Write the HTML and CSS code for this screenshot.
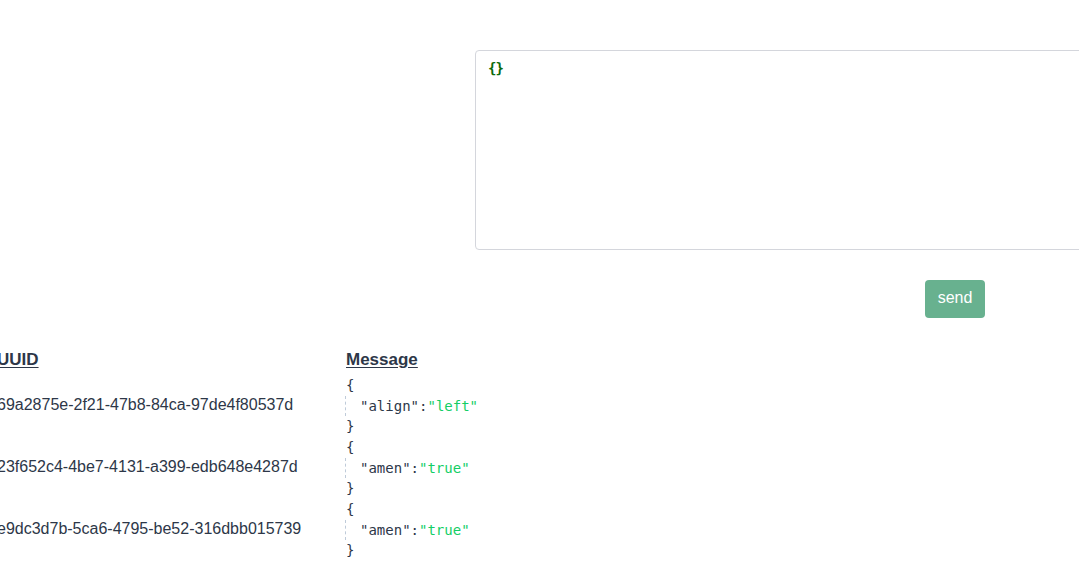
FILE: index.html
```html
<!DOCTYPE html>
<html lang="en">
<head>
<meta charset="utf-8">
<title>Messages</title>
<link rel="stylesheet" href="styles.css">
</head>
<body>
<div class="page">
  <section class="composer">
    <div class="editor"><span class="code">{}</span></div>
    <div class="actions"><button class="send">send</button></div>
  </section>
  <section class="table">
    <div class="th">UUID</div>
    <div class="th">Message</div>

    <div class="uuid">69a2875e-2f21-47b8-84ca-97de4f80537d</div>
    <div class="json">
      <div class="line">{</div>
      <div class="line"><span class="indent"></span><span class="key">"align"</span>:<span class="str">"left"</span></div>
      <div class="line">}</div>
    </div>

    <div class="uuid">23f652c4-4be7-4131-a399-edb648e4287d</div>
    <div class="json">
      <div class="line">{</div>
      <div class="line"><span class="indent"></span><span class="key">"amen"</span>:<span class="str">"true"</span></div>
      <div class="line">}</div>
    </div>

    <div class="uuid">e9dc3d7b-5ca6-4795-be52-316dbb015739</div>
    <div class="json">
      <div class="line">{</div>
      <div class="line"><span class="indent"></span><span class="key">"amen"</span>:<span class="str">"true"</span></div>
      <div class="line">}</div>
    </div>
  </section>
</div>
</body>
</html>
```
FILE: styles.css
```css
html, body {
  margin: 0;
  padding: 0;
  background: #ffffff;
}
body {
  width: 1079px;
  height: 561px;
  overflow: hidden;
  font-family: "Liberation Sans", Arial, sans-serif;
  color: #2d3748;
}
.page {
  padding-top: 50px;
}
.composer {
  display: flex;
  flex-direction: column;
}
.editor {
  margin-left: 475px;
  width: 640px;
  height: 200px;
  box-sizing: border-box;
  border: 1px solid #d4d6dc;
  border-radius: 4px;
  padding: 7px 12px;
  font-family: "DejaVu Sans Mono", monospace;
  font-size: 14px;
  line-height: 20px;
}
.code {
  color: #0b6a0b;
  font-weight: bold;
  letter-spacing: -1px;
}
.actions {
  margin-top: 30px;
  margin-left: 925px;
}
.send {
  width: 60px;
  height: 38px;
  border: none;
  border-radius: 4px;
  background: #68b18f;
  color: #ffffff;
  font-family: "Liberation Sans", Arial, sans-serif;
  font-size: 16px;
  padding: 0 0 2px;
}
.table {
  margin-top: 30px;
  margin-left: -3px;
  display: grid;
  grid-template-columns: 349px auto;
}
.th {
  font-weight: bold;
  font-size: 17px;
  line-height: 24px;
  text-decoration: underline;
  text-underline-offset: 2px;
  color: #2d3748;
  margin-bottom: 3px;
}
.uuid {
  font-size: 16px;
  align-self: center;
  margin-top: -2px;
  color: #2d3748;
}
.json {
  font-family: "DejaVu Sans Mono", monospace;
  font-size: 14px;
  color: #2d3748;
}
.line {
  height: 20.67px;
  line-height: 20.67px;
  display: flex;
  white-space: pre;
}
.indent {
  display: inline-block;
  width: 14px;
  border-left: 1px dashed #bfcbd9;
  margin-left: -1px;
}
.str {
  color: #13ce66;
}
```
